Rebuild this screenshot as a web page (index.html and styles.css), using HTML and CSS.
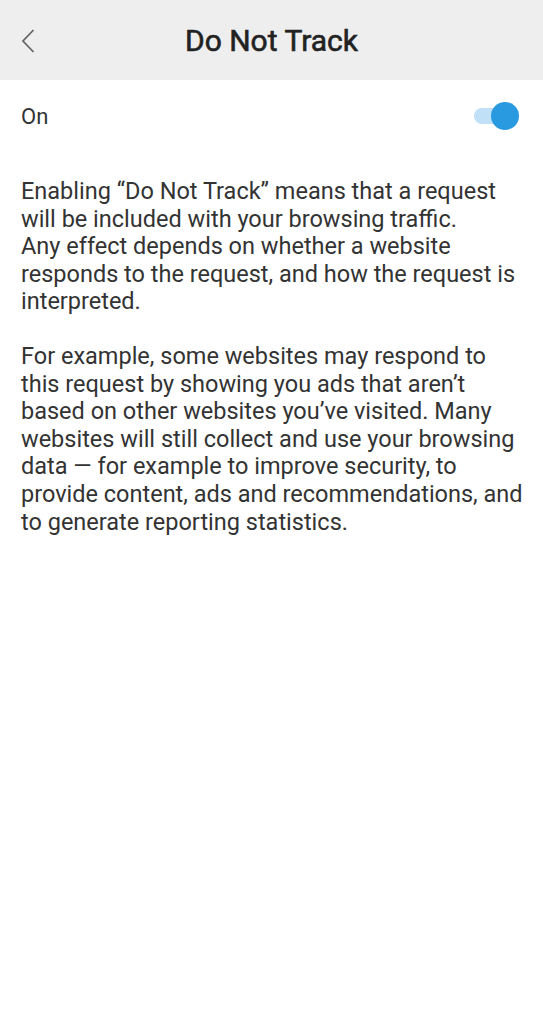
FILE: index.html
```html
<!DOCTYPE html>
<html>
<head>
<meta charset="utf-8">
<link rel="stylesheet" href="styles.css">
</head>
<body>
<header class="topbar">
  <span class="back"><svg width="16" height="26" viewBox="0 0 16 26"><path d="M13.5 2 L3 13 L13.5 24" fill="none" stroke="#666" stroke-width="1.8"/></svg></span>
  <h1 class="title">Do Not Track</h1>
</header>
<main class="content">
  <div class="row">
    <span class="label">On</span>
    <span class="toggle"><span class="track"></span><span class="knob"></span></span>
  </div>
  <p class="para">Enabling “Do Not Track” means that a request will be included with your browsing traffic.<br>Any effect depends on whether a website responds to the request, and how the request is interpreted.</p>
  <p class="para">For example, some websites may respond to this request by showing you ads that aren’t based on other websites you’ve visited. Many websites will still collect and use your browsing data — for example to improve security, to provide content, ads and recommendations, and to generate reporting statistics.</p>
</main>
</body>
</html>
```
FILE: styles.css
```css
html, body { margin: 0; padding: 0; background: #fff; }
body { font-family: Roboto, "Noto Sans", sans-serif; color: #333; }
.topbar {
  height: 80px;
  background: #eeeeee;
  display: flex;
  align-items: center;
  justify-content: center;
  position: relative;
}
.back { position: absolute; left: 20px; top: 28px; }
.title { margin: 0; font-size: 30px; font-weight: 400; color: #222; -webkit-text-stroke: 0.6px #222; }
.content { padding: 0 20px 0 21px; }
.row { height: 72px; display: flex; align-items: center; justify-content: space-between; }
.label { font-size: 22px; color: #333; }
.toggle { position: relative; width: 45px; height: 28px; margin-right: 4px; }
.track { position: absolute; left: 0; top: 6px; width: 40px; height: 16px; border-radius: 8px; background: #bfe0f6; }
.knob { position: absolute; right: 0; top: 0; width: 28px; height: 28px; border-radius: 50%; background: #2a9ae0; }
.para { margin: 26px 0 0; font-size: 23.5px; line-height: 27.6px; color: #333; }
.para + .para { margin-top: 27px; }
```
